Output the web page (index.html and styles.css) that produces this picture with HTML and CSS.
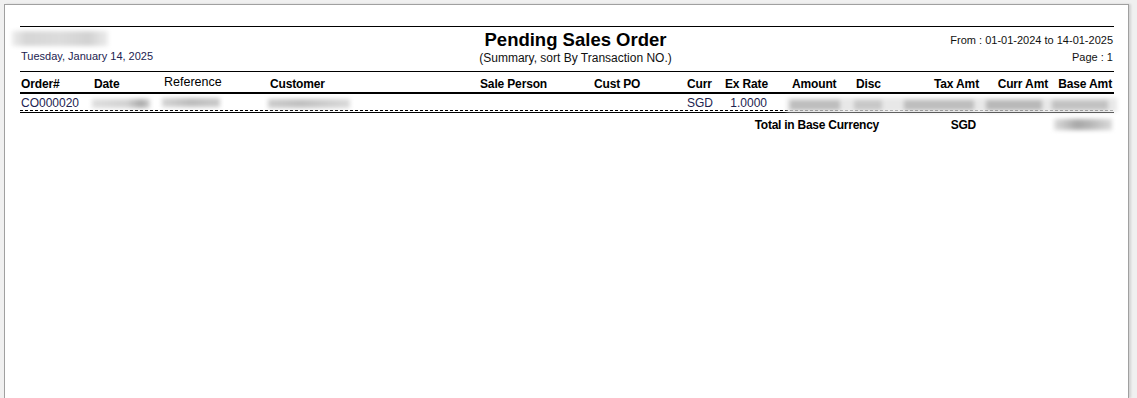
FILE: index.html
```html
<html>
<head>
    <title>Pending Sales Order</title>
    <meta charset="UTF-8">
    <link rel="stylesheet" href="styles.css">
</head>

<body>

<div class="sheet">

    <div class="report_head">
        <div class="head_left">
            <div class="company"><span class="smudge company_smudge"></span></div>
            <div class="print_date">Tuesday, January 14, 2025</div>
        </div>
        <div class="head_center">
            <div class="report_title">Pending Sales Order</div>
            <div class="report_sub">(Summary, sort By Transaction NO.)</div>
        </div>
        <div class="head_right">
            <div class="date_range">From : 01-01-2024 to 14-01-2025</div>
            <div class="page_no">Page : 1</div>
        </div>
    </div>

    <div class="cols col_head">
        <div>Order#</div>
        <div>Date</div>
        <div class="col_ref">Reference</div>
        <div>Customer</div>
        <div>Sale Person</div>
        <div>Cust PO</div>
        <div>Curr</div>
        <div class="num">Ex Rate</div>
        <div class="col_amount">Amount</div>
        <div>Disc</div>
        <div class="num">Tax Amt</div>
        <div class="num">Curr Amt</div>
        <div class="num">Base Amt</div>
    </div>

    <div class="cols order_row">
        <div>CO000020</div>
        <div><span class="smudge date_smudge"></span></div>
        <div><span class="smudge ref_smudge"></span></div>
        <div><span class="smudge cust_smudge"></span></div>
        <div></div>
        <div></div>
        <div>SGD</div>
        <div class="num">1.0000</div>
        <div class="amount_band smudge">
            <span class="blob b_amount"></span>
            <span class="blob b_disc"></span>
            <span class="blob b_tax"></span>
            <span class="blob b_curr"></span>
            <span class="blob b_base"></span>
        </div>
    </div>

    <div class="row_rule"></div>

    <div class="cols total_row">
        <div class="total_label">Total in Base Currency</div>
        <div class="total_curr">SGD</div>
        <div class="total_base"><span class="smudge total_smudge"></span></div>
    </div>

</div>

</body>
</html>
```

FILE: styles.css
```css
body{
    margin: 0;
    background-color: #f0f0f0;
    font-family: "Liberation Sans", Arial, Helvetica, sans-serif;
    overflow: hidden;
}

.sheet{
    margin: 4px 8px 0 4px;
    height: 372px;
    padding: 21px 14px 0 15px;
    background-color: white;
    border: 1px solid #a0a0a0;
    border-bottom: none;
    box-shadow: 2px 0 2px rgba(0,0,0,0.12);
}

/* ---- report heading ---- */

.report_head{
    display: grid;
    grid-template-columns: 1fr auto 1fr;
    height: 44px;
    border-top: 1px solid #000;
    border-bottom: 1px solid #000;
}

.company{
    height: 17px;
    margin-top: 4px;
    margin-left: -8px;
}

.company_smudge{
    width: 96px;
    height: 15px;
    background: linear-gradient(90deg, #ececec, #d6d6d6 15%, #dcdcdc 50%, #d2d2d2 80%, #ececec);
}

.print_date{
    margin-top: 2px;
    padding-left: 1px;
    font-size: 11px;
    line-height: 13px;
    color: #1c2350;
}

.head_center{
    padding-left: 17px;
    text-align: center;
}

.report_title{
    margin-top: 2px;
    font-size: 18.5px;
    font-weight: bold;
    line-height: 21px;
    color: #000;
}

.report_sub{
    margin-top: 2px;
    font-size: 12px;
    line-height: 13px;
    color: #111;
}

.head_right{
    padding-right: 1px;
    text-align: right;
    font-size: 11px;
    line-height: 13px;
    color: #111;
}

.date_range{
    margin-top: 7px;
}

.page_no{
    margin-top: 4px;
}

/* ---- columns ---- */

.cols{
    display: grid;
    grid-template-columns: 73px 70px 106px 210px 114px 93px 37px 45px 87px 45px 79px 69px 65px;
}

.cols > div{
    padding-left: 1px;
    white-space: nowrap;
}

.cols .num{
    text-align: right;
    padding-left: 0;
}

.col_head{
    height: 20px;
    align-items: end;
    border-bottom: 2px solid #000;
    font-size: 12px;
    font-weight: bold;
    letter-spacing: -0.15px;
    line-height: 14px;
    color: #000;
}

.col_head > div{
    padding-bottom: 1px;
}

.col_head .col_ref{
    font-weight: normal;
    font-size: 12.5px;
    letter-spacing: 0;
    padding-bottom: 3px;
}

.col_head .col_amount{
    padding-left: 24px;
}

.col_head .num:last-child{
    padding-right: 1px;
}

.order_row{
    height: 16px;
    padding-top: 2px;
    box-sizing: border-box;
    font-size: 12px;
    line-height: 14px;
    color: #1c2350;
}

.order_row .num{
    padding-right: 1px;
}

/* blurred-out values */
.smudge{
    display: inline-block;
    filter: blur(2px);
}

.date_smudge{
    width: 58px;
    height: 9px;
    margin: 3px 0 0 -2px;
    background: linear-gradient(90deg, #dedede, #d2d2d2 60%, #aaaaaa 85%, #d0d0d0);
}

.ref_smudge{
    width: 58px;
    height: 9px;
    margin: 2px 0 0 -2px;
    background: linear-gradient(90deg, #d4d4d4, #bcbcbc 50%, #cacaca);
}

.cust_smudge{
    width: 82px;
    height: 9px;
    margin: 3px 0 0 -2px;
    background: linear-gradient(90deg, #cccccc, #c0c0c0 40%, #dadada);
}

.amount_band{
    grid-column: 9 / 14;
    display: flex;
    margin: 2px -4px -2px 19px;
    height: 14px;
    background-color: #e8e8e8;
    align-items: center;
    padding-left: 0;
}

.blob{
    display: block;
    height: 10px;
    background-color: #bdbdbd;
}

.b_amount{ width: 50px; margin-left: 2px; }
.b_disc{ width: 28px; margin-left: 14px; background-color: #c8c8c8; }
.b_tax{ width: 70px; margin-left: 22px; }
.b_curr{ width: 56px; margin-left: 12px; background-color: #b8b8b8; }
.b_base{ width: 56px; margin-left: 10px; background-color: #c2c2c2; }

.row_rule{
    height: 2px;
    border-bottom: 1px solid #000;
    background: repeating-linear-gradient(90deg, #000 0 3px, transparent 3px 5px) top left / 100% 1px no-repeat;
}

/* ---- totals ---- */

.total_row{
    padding-top: 5px;
    font-size: 12px;
    font-weight: bold;
    letter-spacing: -0.25px;
    line-height: 14px;
    color: #000;
}

.total_row .total_label{
    grid-column: 1 / 11;
    text-align: right;
    padding-right: 21px;
}

.total_row .total_curr{
    grid-column: 11;
    text-align: right;
    padding-right: 3px;
}

.total_row .total_base{
    grid-column: 13;
    padding-left: 0;
}

.total_smudge{
    width: 58px;
    height: 11px;
    margin: 1px -4px 0 6px;
    background: linear-gradient(90deg, #dcdcdc, #a8a8a8 40%, #b4b4b4 60%, #dadada);
}
```
